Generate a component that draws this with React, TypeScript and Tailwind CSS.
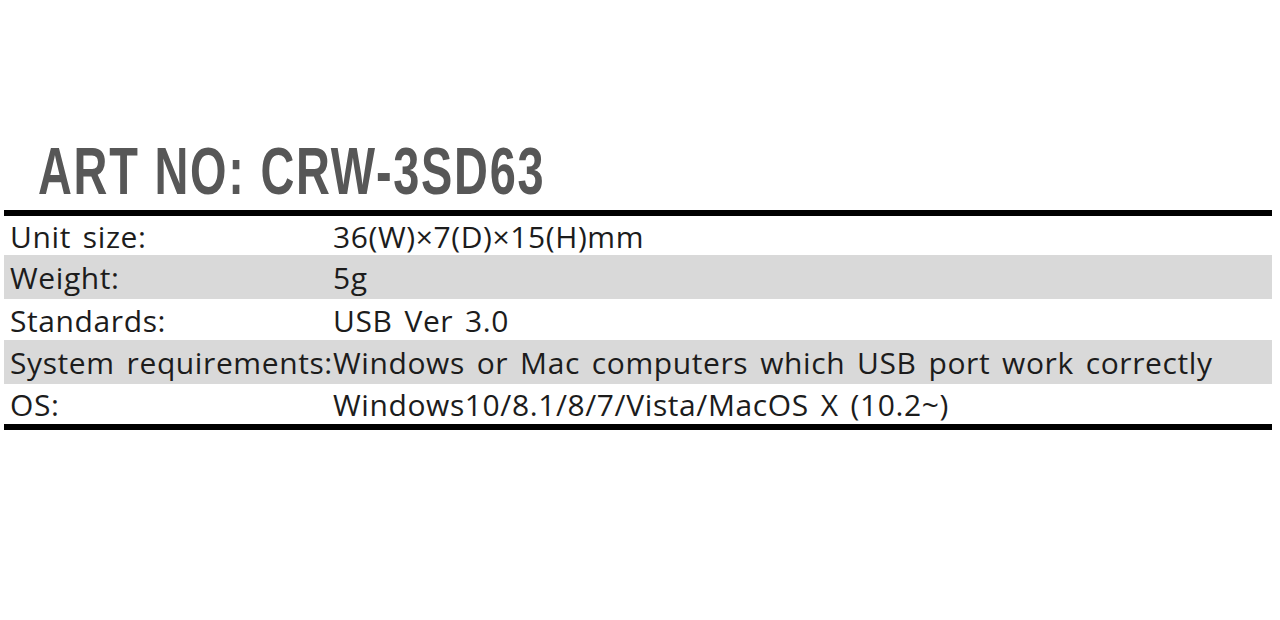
import React from "react";

const rows: { label: string; value: string; h: string; shaded: boolean }[] = [
  { label: "Unit size:", value: "36(W)×7(D)×15(H)mm", h: "h-[39px]", shaded: false },
  { label: "Weight:", value: "5g", h: "h-[44px]", shaded: true },
  { label: "Standards:", value: "USB Ver 3.0", h: "h-[41px]", shaded: false },
  {
    label: "System requirements:",
    value: "Windows or Mac computers which USB port work correctly",
    h: "h-[44px]",
    shaded: true,
  },
  { label: "OS:", value: "Windows10/8.1/8/7/Vista/MacOS X (10.2~)", h: "h-[40px]", shaded: false },
];

const cell =
  "font-['Open_Sans',sans-serif] text-[30px] leading-none text-[#1c1c1c] whitespace-nowrap tracking-[0.6px] [word-spacing:3.5px]";

const App: React.FC = () => {
  return (
    <div className="w-[1280px] h-[620px] bg-white overflow-hidden">
      <div className="pt-[132px] pl-[38px] h-[210px]">
        <h1 className="origin-left scale-x-[0.7] font-['Liberation_Sans',sans-serif] font-bold text-[67px] leading-[78px] text-[#575757] tracking-[2.5px] whitespace-nowrap">
          ART NO: CRW-3SD63
        </h1>
      </div>
      <div className="mx-[4px] w-[1268px] border-t-[6px] border-b-[6px] border-black">
        {rows.map((r) => (
          <div
            key={r.label}
            className={`flex items-center pt-[2px] ${r.h} ${r.shaded ? "bg-[#d9d9d9]" : "bg-white"}`}
          >
            <div className={`w-[329px] pl-[6px] ${cell}`}>{r.label}</div>
            <div className={cell}>{r.value}</div>
          </div>
        ))}
      </div>
    </div>
  );
};

export default App;
